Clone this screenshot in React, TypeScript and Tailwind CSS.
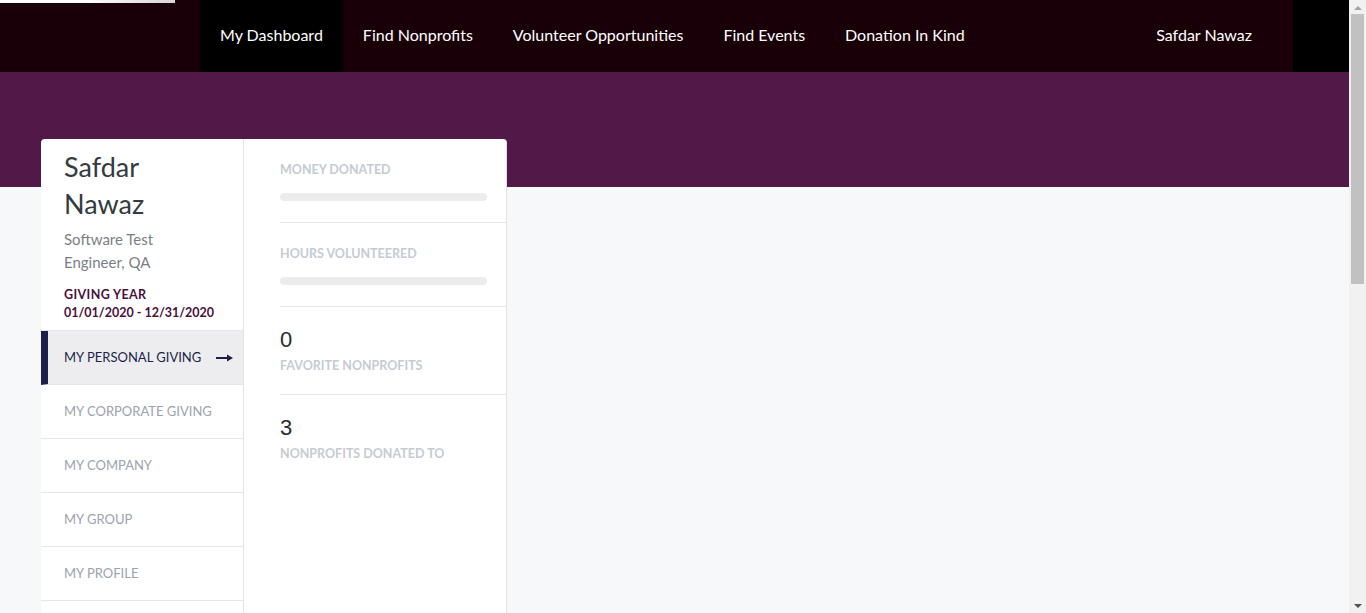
const navItems = ['My Dashboard', 'Find Nonprofits', 'Volunteer Opportunities', 'Find Events', 'Donation In Kind']

const menuItems = ['My Personal Giving', 'My Corporate Giving', 'My Company', 'My Group', 'My Profile']

const ProgressStat = ({ label }: { label: string }) => (
  <div className="ml-9 border-b border-[#e6e6e6] pt-[24px] pb-[21px] pr-[19px]">
    <div className="text-[12.5px] font-bold uppercase leading-[14px] text-[#c6cbd3]">{label}</div>
    <div className="mt-[16px] h-2 rounded-full bg-[#ececec]" />
  </div>
)

const CountStat = ({ value, label, last }: { value: string; label: string; last?: boolean }) => (
  <div className={`ml-9 pt-[20px] pb-[21px] ${last ? '' : 'border-b border-[#e6e6e6]'}`}>
    <div className="font-['Liberation_Sans',Arial,sans-serif] text-[22px] leading-[26px] text-[#2b2b2b]">{value}</div>
    <div className="mt-[6px] text-[12.5px] font-bold uppercase leading-[14px] text-[#c6cbd3]">{label}</div>
  </div>
)

export default function App() {
  return (
    <div className="flex h-screen overflow-hidden bg-[#f7f8fa] font-['Lato',sans-serif]">
      <div className="flex-1 overflow-hidden">
        {/* Top nav */}
        <nav className="relative flex h-[72px] bg-[#190008] text-white">
          <div className="absolute left-0 top-0 h-[3px] w-[175px] bg-gradient-to-r from-white via-white to-[#d9d4d6]" />
          <div className="w-[200px]" />
          <ul className="flex">
            {navItems.map((item, i) => (
              <li
                key={item}
                className={`flex items-center px-5 pb-[2px] text-[16px] ${i === 0 ? 'bg-black' : ''}`}
              >
                {item}
              </li>
            ))}
          </ul>
          <div className="flex-1" />
          <div className="flex items-center pb-[2px] pl-5 pr-[41px] text-[16px]">Safdar Nawaz</div>
          <div className="w-[56px] bg-black" />
        </nav>

        {/* Banner */}
        <div className="h-[115px] bg-[#521847]" />

        {/* Card */}
        <div className="-mt-[48px] ml-[41px] flex h-[600px] w-[466px] rounded-t-[4px] border-r border-[#e3e3e3] bg-white">
          <div className="w-[203px] border-r border-[#e3e3e3]">
            <div className="px-[23px] pt-[9px]">
              <div className="text-[27px] leading-[37px] text-[#333a40]">Safdar Nawaz</div>
              <div className="mt-[6px] w-[110px] text-[15px] leading-[23px] text-[#7a7f86]">Software Test Engineer, QA</div>
              <div className="mt-[12px] text-[12.5px] font-bold leading-[18px] tracking-[0.03em] text-[#4a0f3e]">GIVING YEAR</div>
              <div className="text-[12.5px] font-bold leading-[18px] text-[#4a0f3e]">01/01/2020 - 12/31/2020</div>
            </div>
            <ul className="mt-[8px] border-t border-[#e6e6e6]">
              {menuItems.map((item, i) => (
                <li
                  key={item}
                  className={`flex h-[54px] items-center justify-between border-b border-[#e6e6e6] pr-[10px] text-[13px] uppercase ${
                    i === 0
                      ? 'border-l-[7px] border-l-[#1c1f4a] bg-[#ededf0] pl-[16px] text-[#1c1f4a]'
                      : 'pl-[23px] text-[#9ba3ad]'
                  }`}
                >
                  <span>{item}</span>
                  {i === 0 && (
                    <svg width="17" height="8" viewBox="0 0 17 8" className="text-[#1c1f4a]">
                      <rect x="0" y="3" width="12" height="2" fill="currentColor" />
                      <path d="M11 0.5 L17 4 L11 7.5 Z" fill="currentColor" />
                    </svg>
                  )}
                </li>
              ))}
            </ul>
          </div>
          <div className="flex-1">
            <ProgressStat label="Money Donated" />
            <ProgressStat label="Hours Volunteered" />
            <CountStat value="0" label="Favorite Nonprofits" />
            <CountStat value="3" label="Nonprofits Donated To" last />
          </div>
        </div>
      </div>

      {/* Scrollbar */}
      <div className="flex w-[17px] flex-col items-center bg-[#f1f1f1]">
        <div className="mt-[6px] h-0 w-0 border-x-[4px] border-b-[4px] border-x-transparent border-b-[#a3a3a3]" />
        <div className="mt-[4px] h-[270px] w-[13px] bg-[#c1c1c1]" />
        <div className="flex-1" />
        <div className="mb-[5px] h-0 w-0 border-x-[4px] border-t-[4px] border-x-transparent border-t-[#505050]" />
      </div>
    </div>
  )
}
